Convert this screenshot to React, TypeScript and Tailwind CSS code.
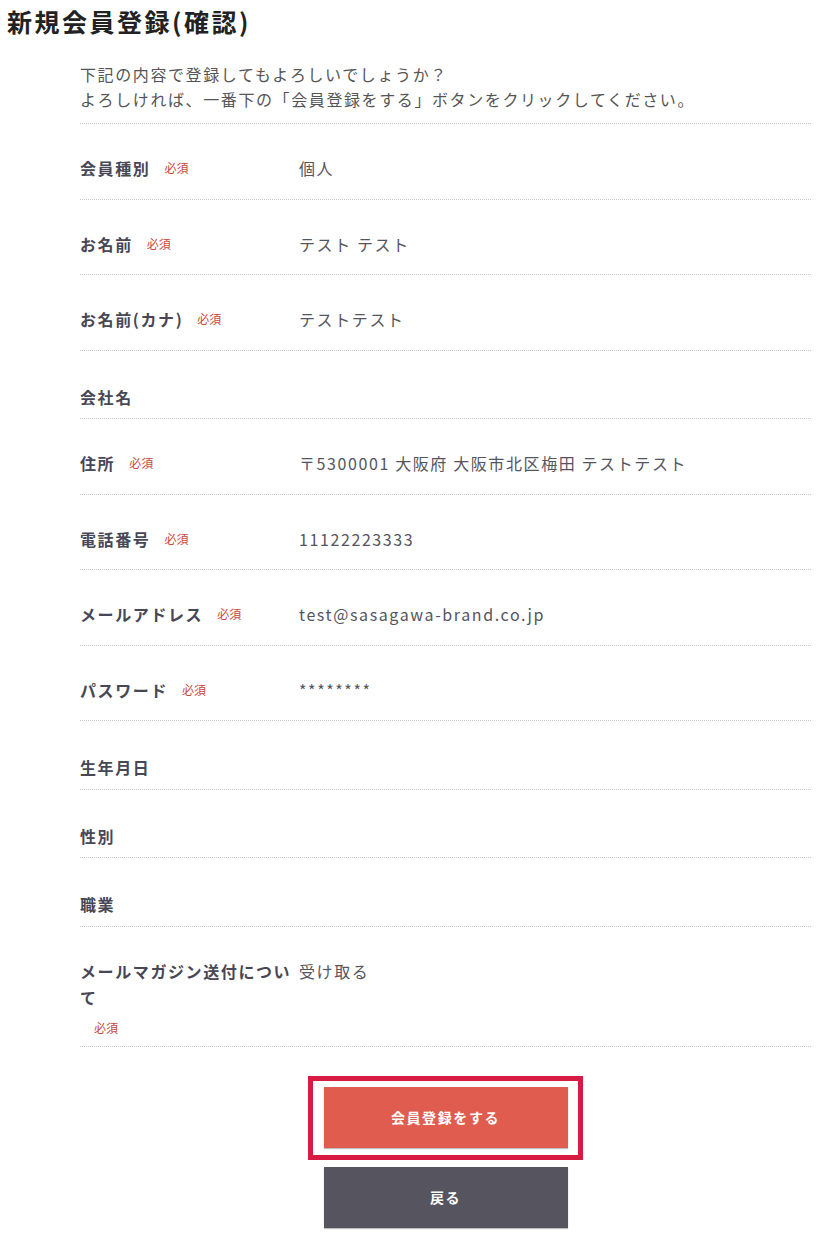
import React from 'react'

type Row = {
  label: string
  required?: boolean
  value?: string
}

const rows: Row[] = [
  { label: '会員種別', required: true, value: '個人' },
  { label: 'お名前', required: true, value: 'テスト テスト' },
  { label: 'お名前(カナ)', required: true, value: 'テストテスト' },
  { label: '会社名' },
  { label: '住所', required: true, value: '〒5300001 大阪府 大阪市北区梅田 テストテスト' },
  { label: '電話番号', required: true, value: '11122223333' },
  { label: 'メールアドレス', required: true, value: 'test@sasagawa-brand.co.jp' },
  { label: 'パスワード', required: true, value: '********' },
  { label: '生年月日' },
  { label: '性別' },
  { label: '職業' },
]

function Required({ className = '' }: { className?: string }) {
  return (
    <span className={`text-[12px] leading-[26px] tracking-normal font-normal text-[#c9473b] ${className}`}>
      必須
    </span>
  )
}

function ConfirmRow({ label, required, value }: Row) {
  const pad = value ? 'pt-[31px] pb-[17.5px]' : 'pt-[33px] pb-[8.5px]'
  return (
    <div className={`flex border-b border-dotted border-[#c8c8c8] ${pad}`}>
      <div className="w-[219px] shrink-0 flex flex-wrap items-center">
        <span className="text-[16px] leading-[26px] font-bold text-[#474756]">{label}</span>
        {required && <Required className="ml-[14px]" />}
      </div>
      {value && <div className="flex-1 text-[16px] leading-[26px] text-[#55555f]">{value}</div>}
    </div>
  )
}

export default function App() {
  return (
    <div
      className="w-[830px] min-h-[1260px] bg-white tracking-[0.1em]"
      style={{ fontFamily: '"Noto Sans CJK JP", "Noto Sans", sans-serif' }}
    >
      <h1 className="px-[7px] text-[25px] leading-[36px] pt-[3px] pb-[2px] font-bold tracking-[0.1em] text-[#222222]">
        新規会員登録(確認)
      </h1>

      <div className="ml-[80px] w-[731px]">
        {/* Intro */}
        <div className="mt-[21px] pb-[11px] border-b border-dotted border-[#c8c8c8] text-[16px] leading-[25px] text-[#555555]">
          <p>下記の内容で登録してもよろしいでしょうか？</p>
          <p>よろしければ、一番下の「会員登録をする」ボタンをクリックしてください。</p>
        </div>

        {/* Rows */}
        {rows.map((r) => (
          <ConfirmRow key={r.label} {...r} />
        ))}

        {/* Mail magazine row: label wraps, badge drops below */}
        <div className="flex border-b border-dotted border-[#c8c8c8] pt-[31px] pb-[5px]">
          <div className="w-[219px] shrink-0">
            <span className="block text-[16px] leading-[26px] font-bold text-[#474756]">
              メールマガジン送付について
            </span>
            <Required className="block mt-[5px] ml-[14px]" />
          </div>
          <div className="flex-1 text-[16px] leading-[26px] text-[#55555f]">受け取る</div>
        </div>

        {/* Buttons */}
        <div className="flex flex-col items-center pt-[40px]">
          <div className="relative">
            <button className="w-[244px] h-[61px] bg-[#e05c4f] text-white text-[14px] font-bold shadow-[0_1px_1px_rgba(0,0,0,0.25)]">
              会員登録をする
            </button>
            <div className="absolute left-[-16px] right-[-15px] top-[-11px] bottom-[-12px] border-[5px] border-[#d81b43] pointer-events-none" />
          </div>
          <button className="mt-[19px] w-[244px] h-[61px] bg-[#55545f] text-white text-[14px] font-bold shadow-[0_1px_1px_rgba(0,0,0,0.25)]">
            戻る
          </button>
        </div>
      </div>
    </div>
  )
}
